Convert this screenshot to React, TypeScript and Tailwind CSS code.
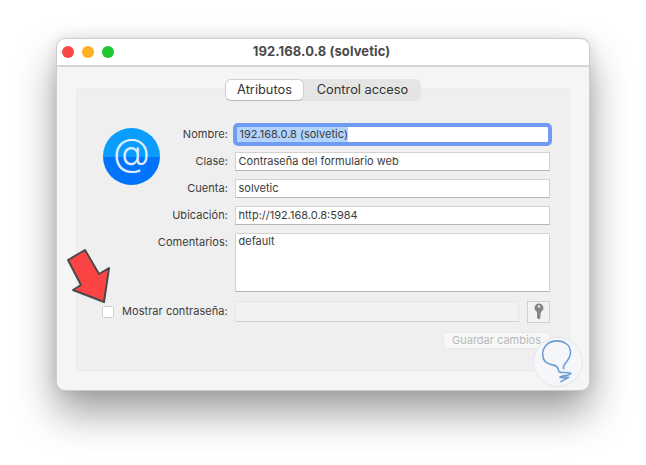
import React from "react";

const font = { fontFamily: "Inter, 'Liberation Sans', sans-serif" };

function Row({ label, value, h = "h-[19px]", top = false }: { label: string; value: string; h?: string; top?: boolean }) {
  return (
    <div className={`flex ${top ? "items-start" : "items-center"} gap-[7px]`}>
      <span className={`w-[68px] whitespace-nowrap flex justify-end text-[11px] tracking-[0.05px] text-[#3c3c3c] ${top ? "mt-[1px]" : ""}`}>{label}</span>
      <div className={`w-[315px] ${h} bg-white border border-[#d2d2d2] border-b-[#b5b5b5] pl-[2.5px] text-[11px] ${top ? "leading-[14px]" : "leading-[17px]"} text-[#3c3c3c]`}>
        {value}
      </div>
    </div>
  );
}

export default function App() {
  return (
    <div className="w-[646px] h-[465px] bg-white pt-[38px] pl-[56px] overflow-hidden" style={font}>
      <div className="relative w-[534px] h-[353px] rounded-[9px] bg-[#f5f5f5] border border-[#cccccc] shadow-[0_22px_40px_rgba(0,0,0,0.38),0_0_14px_rgba(0,0,0,0.10)] flex flex-col">
        {/* Title bar */}
        <div className="h-[28px] shrink-0 bg-white rounded-t-[9px] border-b-2 border-[#d6d6d6] flex items-center relative">
          <div className="flex gap-[8px] pl-[5px]">
            <span className="w-[12px] h-[12px] rounded-full bg-[#fc4646]" />
            <span className="w-[12px] h-[12px] rounded-full bg-[#fdb024]" />
            <span className="w-[12px] h-[12px] rounded-full bg-[#1fc72e]" />
          </div>
          <span className="flex-1 text-center pr-[60px] text-[13px] tracking-[0.1px] font-bold text-[#4a4a4a]">192.168.0.8 (solvetic)</span>
        </div>

        {/* Content panel */}
        <div className="relative mt-[21px] mx-[19px] h-[283px] bg-[#efefef] border border-[#ebebeb] rounded-[4px] pl-[25px]">
          {/* Tabs */}
          <div className="absolute top-[-10px] left-[148px] flex h-[22px] w-[196px] rounded-[6px] bg-[#e5e5e5] text-[12.8px] text-[#333333]">
            <div className="w-[79px] h-[22px] bg-white rounded-[6px] border border-[#cfcfcf] border-b-[#b8b8b8] flex items-center justify-center">Atributos</div>
            <div className="flex-1 flex items-center justify-center">Control acceso</div>
          </div>

          <div className="flex pt-[36px]">
            <div className="w-[58px] pt-[3px] pl-[1px] shrink-0">
              <svg width="57" height="57" viewBox="0 0 57 57">
                <defs>
                  <clipPath id="c"><circle cx="28.5" cy="28.5" r="28.5" /></clipPath>
                </defs>
                <g clipPath="url(#c)">
                  <rect width="57" height="29" fill="#0a9dfd" />
                  <rect y="29" width="57" height="28" fill="#0174fb" />
                </g>
                <text x="28.5" y="38" textAnchor="middle" fontSize="38" fontWeight="300" fontFamily="Inter, sans-serif" fill="#dfeefc">@</text>
              </svg>
            </div>
            <div className="flex flex-col gap-[8px]">
              <div className="flex items-center gap-[7px] h-[19px]">
                <span className="w-[68px] flex justify-end text-[11px] tracking-[0.05px] text-[#3c3c3c]">Nombre:</span>
                <div className="w-[311px] h-[15px] mx-[2px] bg-white outline-[4px] outline-[#6f9bf3] rounded-[1px] text-[11px] leading-[15px] text-[#3c3c3c]">
                  <span className="inline-block h-[15px] pl-[2.5px] bg-[#b3d4fc]">192.168.0.8 (solvetic)</span>
                </div>
              </div>
              <Row label="Clase:" value="Contraseña del formulario web" />
              <Row label="Cuenta:" value="solvetic" />
              <Row label="Ubicación:" value="http://192.168.0.8:5984" />
              <Row label="Comentarios:" value="default" h="h-[59px]" top />
            </div>
          </div>

          {/* Show password */}
          <div className="flex items-center mt-[9px] h-[21px]">
            <span className="w-[12px] h-[12px] bg-white border border-[#d0d0d0] rounded-[2px] shrink-0" />
            <span className="ml-[8px] w-[106px] text-[11px] tracking-[0.05px] text-[#3c3c3c] whitespace-nowrap">Mostrar contraseña:</span>
            <div className="ml-[7px] w-[284px] h-[21px] bg-[#f2f2f2] border border-[#e6e6e6] border-b-[#d0d0d0]" />
            <div className="ml-[8px] w-[23px] h-[22px] bg-[#f2f2f2] border border-[#cfcfcf] flex items-center justify-center">
              <svg width="10" height="17" viewBox="0 0 10 17">
                <path fillRule="evenodd" d="M5 0.5a4.5 4.5 0 0 1 2 8.5v1.5l-1 1 1 1-1 1 .6 1L5 16.5 3 15V9A4.5 4.5 0 0 1 5 .5zM5 2.2a1.2 1.2 0 1 0 0 2.4 1.2 1.2 0 0 0 0-2.4z" fill="#858585" />
              </svg>
            </div>
          </div>

          {/* Save */}
          <div className="flex justify-end mt-[10px] pr-[19px]">
            <div className="w-[107px] h-[17px] bg-[#f7f7f7] border border-[#e8e8e8] rounded-[4px] flex items-center justify-center text-[11px] text-[#b9b9b9]">
              Guardar cambios
            </div>
          </div>
        </div>

        {/* Red arrow */}
        <svg className="absolute left-[9px] top-[210px]" width="50" height="56" viewBox="0 0 50 56">
          <path d="M2 11 L19 1 L33 25 L43 19 L38 53 L7 41 L15 36 Z" fill="#fd4444" stroke="#4a4a4a" strokeWidth="2" strokeLinejoin="round" />
        </svg>

        {/* Watermark */}
        <div className="absolute left-[476px] top-[298px] w-[50px] h-[50px] rounded-full bg-[#f5f6f9] border border-[#e6e6ea]">
          <svg width="48" height="48" viewBox="0 0 50 50" fill="none">
            <path d="M31 32 C28 28 38 24 38 15 C38 7 31 3 24 3 C15 3 9 9 9 17 C9 23 13 27 19 28 C23 28 25 30 26 35 C28 37 35 35 38.5 37 C36 40 27 39 27 41 C29 42 33 41 36 41 L28 45.5" stroke="#6d9bd3" strokeWidth="1.6" strokeLinecap="round" strokeLinejoin="round" />
          </svg>
        </div>
      </div>
    </div>
  );
}
